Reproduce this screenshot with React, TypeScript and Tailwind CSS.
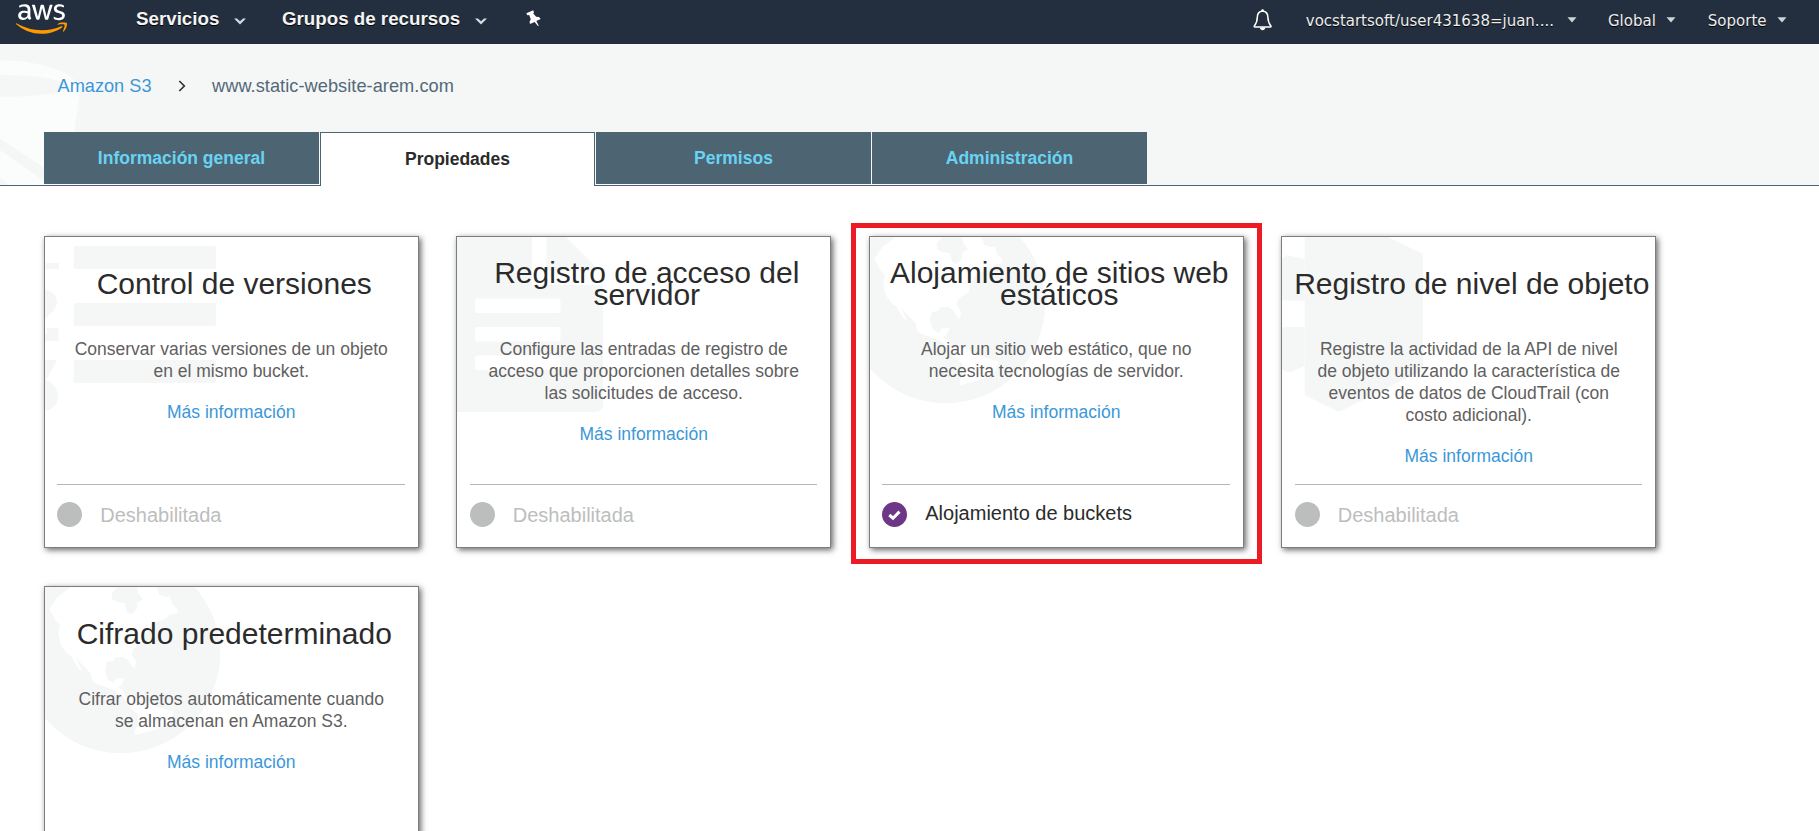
import type { ReactNode } from 'react';
import { FaAws } from 'react-icons/fa';

const SHADE = '#f5f7f7';

function AwsLogo() {
  return (
    <div className="grid h-[41px] w-[51px] shrink-0">
      <FaAws className="col-start-1 row-start-1 h-[41px] w-[51px] translate-y-px text-white [clip-path:inset(0_0_41%_0)]" />
      <FaAws className="col-start-1 row-start-1 h-[41px] w-[51px] text-[#ff9900] [clip-path:inset(59%_0_0_0)]" />
    </div>
  );
}

function Chevron() {
  return (
    <svg width="12" height="7" viewBox="0 0 12 7" className="shrink-0">
      <path d="M0 0.5H3L6 3.2L9 0.5H12L6 6.5Z" fill="#d5d9de" />
    </svg>
  );
}

function Caret() {
  return (
    <svg width="10" height="6" viewBox="0 0 10 6" className="shrink-0">
      <path d="M0.5 0.3H9.5L5 5.6Z" fill="#d0d4d9" />
    </svg>
  );
}

function Pin() {
  return (
    <svg width="15" height="17" viewBox="0 0 15 17" className="shrink-0">
      <path
        d="M0.300 3.200L7.200 0.200L8 2.600L7.200 3.400L10.200 6.800L13 7L14.700 8.900L10.300 11L12.800 15.700L11.900 16.100L8.600 11.900L4 14L3.600 11.600L4.800 9.400L3.200 5L1.400 5.200Z"
        fill="#fff"
      />
    </svg>
  );
}

function Bell() {
  return (
    <svg width="20" height="22" viewBox="0 0 20 22" className="shrink-0" fill="none">
      <path
        d="M8.6 2.3C5.4 2.9 4.4 5.3 4.3 8.3C4.2 12.6 3.4 14.6 1.3 16.9C1 17.4 1.2 17.9 1.8 17.9H17.4C18 17.9 18.2 17.4 17.9 16.9C15.8 14.6 15 12.6 14.9 8.3C14.8 5.3 13.8 2.9 10.6 2.3Z"
        stroke="#fff"
        strokeWidth="1.5"
        strokeLinejoin="round"
      />
      <circle cx="9.6" cy="1.5" r="1.3" fill="#fff" />
      <path d="M6.8 18.4H12.4C12 20.2 11 21.2 9.6 21.2S7.2 20.2 6.8 18.4Z" fill="#fff" />
    </svg>
  );
}

function BucketArt() {
  return (
    <svg width="90" height="141" viewBox="0 44 90 141" className="absolute left-0 top-0">
      <path d="M0 60.5C45 60.5 80 74 80 92L66 185H0Z" fill="#fbfdfc" />
      <path d="M0 75C40 75 66 80 66 87C66 93 40 96.5 0 97Z" fill="#f5f7f7" />
      <path d="M0 138.5L60 178V192L0 150Z" fill="#f5f7f7" />
      <path d="M0 178L10 185H0Z" fill="#f5f7f7" />
    </svg>
  );
}

function VersionsArt() {
  return (
    <g fill={SHADE}>
      <rect x="28.5" y="9" width="142.5" height="23" rx="2" />
      <rect x="28.5" y="66" width="142.5" height="23" rx="2" />
      <rect x="28.5" y="123" width="142.5" height="23" rx="2" />
      <path d="M1 26H14V32H0V29H1Z" />
      <path d="M0 53C7 53 12 59 12 65C12 71 6 77 0 81Z" />
      <path d="M2 91H13.5V104H0V97H2Z" />
      <path d="M0 123H12L4 138L1 143C8 145 13 151 13 160C13 168 7 173 0 174Z" />
    </g>
  );
}

function DocumentArt() {
  return (
    <g>
      <path d="M0 0H109L144 35C145.500 37 146 39 146 42V168C146 172 143 175 138 175H0Z" fill={SHADE} />
      <path d="M75 0H89.500V34H146V48H78Q75 48 75 45Z" fill="#fff" />
      <rect x="18" y="61.500" width="85.500" height="14.500" rx="2.500" fill="#fff" />
      <rect x="18" y="90" width="85.500" height="14.500" rx="2.500" fill="#fff" />
      <rect x="18" y="118.500" width="85.500" height="14.500" rx="2.500" fill="#fff" />
    </g>
  );
}

function GlobeArt() {
  return (
    <g>
      <circle cx="75.700" cy="66.700" r="99.500" fill={SHADE} />
      <g transform="translate(-45 -27) scale(0.33333)" fill="#fff">
        <path d="M148 148L158 132L172 112L210 82H352L335 100L336 118L352 126L375 130L382 158L396 162L412 145L412 128L428 118L415 98L410 82H470L478 105L500 112L510 108L516 132L534 150L530 160L508 164L500 174L470 186L450 200L432 230V246L402 265L394 283L408 305L405 326L396 320L385 300L368 290L345 292L340 302L320 306L315 330L322 358L340 370L350 355L374 355L364 375L354 382L372 392L376 410L392 412L430 418L470 440L522 455L510 485L472 508L403 526L406 508L416 490L414 462L395 448L378 425L368 408L345 392L325 384L290 372L276 362L272 340L248 315L225 290L240 318L245 335L230 318L215 290L200 280L182 255L175 220L180 195L165 180L160 168Z" />
      </g>
    </g>
  );
}

function ObjectArt() {
  return (
    <g fill={SHADE}>
      <path d="M22.700 0H106L141 17V133L57 175L22.700 158Z" />
      <path d="M0 21L5 18L22.700 22V63.500H0Z" />
      <path d="M0 90H22.700V129L8 135.500L0 133Z" />
    </g>
  );
}

type CardProps = {
  title: string[];
  text: string[];
  art: ReactNode;
  status?: string;
  active?: boolean;
};

function Card({ title, text, art, status = 'Deshabilitada', active = false }: CardProps) {
  return (
    <div className="relative flex h-[312px] w-[375px] shrink-0 flex-col border border-[#7d7d7d] bg-white shadow-[2px_2px_6px_rgba(0,0,0,0.6)]">
      <svg width="200" height="190" viewBox="0 0 200 190" className="absolute left-0 top-0">
        {art}
      </svg>
      <h2 className="relative flex h-[94px] flex-col items-center justify-center pl-[6px] text-center text-[30px] leading-[22px] text-[#2b2b2b]">
        {title.map((line) => (
          <span key={line} className="whitespace-nowrap">{line}</span>
        ))}
      </h2>
      <div className="relative flex grow flex-col items-center pt-[7px] text-[17.5px] leading-[22px] text-[#5f6060]">
        {text.map((line) => (
          <span key={line} className="whitespace-nowrap">{line}</span>
        ))}
        <a className="mt-[19px] text-[#3b97d8]">Más información</a>
      </div>
      <div className="ml-[12.5px] flex h-[63px] w-[347.500px] border-t border-[#b5b7b7] pt-[17px]">
        <svg width="25" height="25" viewBox="0 0 25 25" className="shrink-0">
          <circle cx="12.5" cy="12.5" r="12.500" fill={active ? '#6f3587' : '#bcbebd'} />
          {active && <path d="M7.300 13L11 16.200L17.500 9.600" stroke="#fff" strokeWidth="3" fill="none" />}
        </svg>
        <span
          className={
            active
              ? 'ml-[18px] text-[20px] leading-[22px] text-[#2b2b2b]'
              : 'ml-[18px] pt-[2px] text-[20px] leading-[22px] text-[#bcbebd]'
          }
        >
          {status}
        </span>
      </div>
    </div>
  );
}

function Tab({ children }: { children: ReactNode }) {
  return (
    <div className="mr-px flex h-[52px] w-[275px] items-center justify-center bg-[#4d6472] text-[#69d3f3]">
      {children}
    </div>
  );
}

export default function App() {
  return (
    <div className="h-[831px] w-[1819px] overflow-hidden bg-white font-['Liberation_Sans',Arial,sans-serif]">
      <header className="flex h-[44px] items-start bg-[#232f3e] text-[18.750px] font-bold leading-[20px] text-[#f4f4f4]">
        <div className="-mt-[2px] ml-4">
          <AwsLogo />
        </div>
        <div className="ml-[69px] mt-[9px] flex items-center [text-shadow:0_1px_0_#000]">
          <span className="mr-[14.500px]">Servicios</span>
          <div className="pt-[4px]"><Chevron /></div>
          <span className="ml-[36px] mr-[15px]">Grupos de recursos</span>
          <div className="pt-[4px]"><Chevron /></div>
        </div>
        <div className="ml-[39px] mt-[10px]"><Pin /></div>
        <div className="ml-auto mr-[32.500px] flex h-[44px] items-start font-['DejaVu_Sans',Verdana,sans-serif] text-[15px] font-normal text-[#eeeeee] [text-shadow:0_1px_0_#000]">
          <div className="mr-[33px] mt-[9px]"><Bell /></div>
          <span className="mr-[13px] mt-[11px]">vocstartsoft/user431638=juan....</span>
          <div className="mr-[31px] mt-[17px]"><Caret /></div>
          <span className="mr-[10px] mt-[11px]">Global</span>
          <div className="mr-[32px] mt-[17px]"><Caret /></div>
          <span className="mr-[10px] mt-[11px]">Soporte</span>
          <div className="mt-[17px]"><Caret /></div>
        </div>
      </header>

      <section className="relative flex h-[142px] flex-col justify-between border-b border-[#4d6472] bg-[#f5f7f7]">
        <BucketArt />
        <nav className="relative flex items-center pl-[57.500px] pt-[31px] text-[18.200px] leading-[22px] text-[#536978]">
          <a className="text-[#3b97d8]">Amazon S3</a>
          <svg width="8" height="12" viewBox="0 0 8 12" className="ml-[26px] mr-[26.500px]" fill="none">
            <path d="M1.300 1L6.300 6L1.300 11" stroke="#333" strokeWidth="1.700" />
          </svg>
          <span className="tracking-[0.05px]">www.static-website-arem.com</span>
        </nav>
        <div className="relative -mb-px flex h-[54px] items-start pl-[44px] text-[17.500px] font-bold leading-[22px]">
          <div className="border-b border-white"><Tab>Información general</Tab></div>
          <div className="mr-px flex h-[54px] w-[275px] items-center justify-center border border-b-0 border-[#4d6472] bg-white pb-[2px] text-[#2b2b2b]">
            Propiedades
          </div>
          <div className="border-b border-white"><Tab>Permisos</Tab></div>
          <div className="-mr-px border-b border-white"><Tab>Administración</Tab></div>
        </div>
      </section>

      <main className="relative flex flex-wrap gap-x-[37.500px] gap-y-[38px] pl-[43.750px] pt-[50px]">
        <Card
          title={['Control de versiones']}
          text={['Conservar varias versiones de un objeto', 'en el mismo bucket.']}
          art={<VersionsArt />}
        />
        <Card
          title={['Registro de acceso del', 'servidor']}
          text={['Configure las entradas de registro de', 'acceso que proporcionen detalles sobre', 'las solicitudes de acceso.']}
          art={<DocumentArt />}
        />
        <div className="relative">
          <Card
            title={['Alojamiento de sitios web', 'estáticos']}
            text={['Alojar un sitio web estático, que no', 'necesita tecnologías de servidor.']}
            art={<GlobeArt />}
            status="Alojamiento de buckets"
            active
          />
          <div className="absolute -left-[18px] -top-[13px] h-[341px] w-[411px] border-[5px] border-[#ed1c24]" />
        </div>
        <Card
          title={['Registro de nivel de objeto']}
          text={['Registre la actividad de la API de nivel', 'de objeto utilizando la característica de', 'eventos de datos de CloudTrail (con', 'costo adicional).']}
          art={<ObjectArt />}
        />
        <Card
          title={['Cifrado predeterminado']}
          text={['Cifrar objetos automáticamente cuando', 'se almacenan en Amazon S3.']}
          art={<GlobeArt />}
        />
      </main>
    </div>
  );
}
